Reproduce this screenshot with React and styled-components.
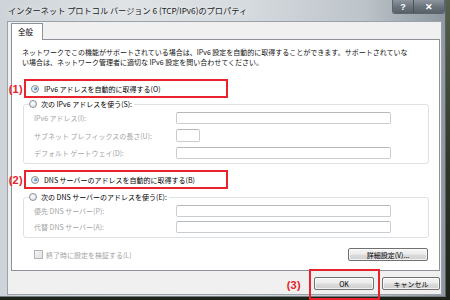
import React from 'react';
import styled, { createGlobalStyle, css } from 'styled-components';

const GlobalStyle = createGlobalStyle`
  html, body { margin: 0; padding: 0; }
  body {
    width: 450px;
    height: 300px;
    overflow: hidden;
    background: #2e3427;
    font-family: "Noto Sans CJK JP", "Noto Sans", sans-serif;
  }
  * { box-sizing: border-box; }
`;

const RED = '#e8232b';

const Page = styled.div`
  width: 450px;
  height: 300px;
  overflow: hidden;
  background: linear-gradient(180deg, #56604a 0%, #2f3527 55%, #1e2219 100%);
`;

const Window = styled.div`
  width: 446px;
  height: 297px;
  display: flex;
  flex-direction: column;
  background: linear-gradient(90deg, #cdd3d8 0%, #dfe3e6 28%, #d6dbdf 55%, #bcc3c9 82%, #8e979f 100%);
  border-right: 1px solid #59616a;
  border-bottom: 1px solid #737b83;
`;

const TitleBar = styled.div`
  height: 21px;
  display: flex;
  align-items: flex-start;
`;

const Title = styled.div`
  padding: 4px 0 0 8px;
  font-size: 8.2px;
  line-height: 12px;
  color: #1c1c1c;
  white-space: nowrap;
  text-shadow: 0 0 5px rgba(255, 255, 255, 0.95);
`;

const Caption = styled.div`
  margin-left: auto;
  display: flex;
  border: 1px solid #5b636b;
  border-top: none;
  border-radius: 0 0 3px 3px;
  overflow: hidden;
`;

const CapBtn = styled.div`
  width: ${p => p.$w}px;
  height: 13px;
  display: flex;
  align-items: center;
  justify-content: center;
  background: linear-gradient(180deg, #8d969e 0%, #6c757d 50%, #575f67 100%);
  color: #fff;
  font-family: "Liberation Sans", sans-serif;
  font-weight: bold;
  font-size: 9px;
  & + & { border-left: 1px solid #4a5159; }
`;

const Body = styled.div`
  margin: 0 3px 0 7px;
  height: 274px;
  background: #f0f0f0;
  border: 1px solid #9aa1a8;
  padding: 0 1px 0 3px;
  display: flex;
  flex-direction: column;
`;

const Tabs = styled.div`
  display: flex;
  padding-top: 1px;
  position: relative;
  z-index: 1;
`;

const Tab = styled.div`
  width: 32px;
  height: 17px;
  margin-bottom: -1px;
  background: #fff;
  border: 1px solid #8e9299;
  border-bottom: none;
  font-size: 7.5px;
  line-height: 15px;
  padding-left: 6px;
  color: #000;
`;

const Panel = styled.div`
  height: 232px;
  background: #fff;
  border: 1px solid #8e9299;
  padding-top: 7px;
  display: flex;
  flex-direction: column;
`;

const Desc = styled.div`
  padding-left: 10px;
  font-size: 7px;
  line-height: 10px;
  color: #111;
  white-space: nowrap;
`;

const Option = styled.div`
  position: relative;
  margin: ${p => p.$top}px 0 0 12px;
  width: 204px;
  height: 19px;
  border: 2px solid ${RED};
  display: flex;
  align-items: center;
  gap: 5px;
  padding-left: 5px;
  font-size: 7px;
  color: #000;
  white-space: nowrap;
`;

const Tag = styled.span`
  position: absolute;
  right: calc(100% + 3px);
  top: 50%;
  transform: translateY(-52%);
  color: ${RED};
  font-family: "Liberation Sans", sans-serif;
  font-weight: bold;
  font-size: 11px;
  letter-spacing: 0.3px;
`;

const Radio = styled.span`
  flex: none;
  position: relative;
  width: 8px;
  height: 8px;
  border-radius: 50%;
  border: 1px solid #8a9097;
  background: radial-gradient(circle at 40% 35%, #ffffff 0%, #e6e8ea 60%, #cfd3d6 100%);
  ${p => p.$on && css`
    &::after {
      content: '';
      position: absolute;
      left: 1.5px;
      top: 1.5px;
      width: 3px;
      height: 3px;
      border-radius: 50%;
      background: radial-gradient(circle at 35% 35%, #9fd2ff 0%, #2b6cc4 70%, #1d4f99 100%);
    }
  `}
`;

const Group = styled.fieldset`
  margin: ${p => p.$top}px 0 0 11px;
  width: 406px;
  padding: 2px 0 4px 10px;
  border: 1px solid #dde1e5;
  border-radius: 3px;
  min-inline-size: 0;
`;

const Legend = styled.legend`
  margin-left: -5px;
  padding: 0 2px 0 0;
  display: flex;
  align-items: center;
  gap: 4px;
  font-size: 7px;
  line-height: 12px;
  height: 12px;
  color: #000;
  white-space: nowrap;
`;

const Rows = styled.div`
  display: grid;
  grid-template-columns: 142px 1fr;
  row-gap: ${p => p.$gap}px;
  align-items: center;
`;

const Label = styled.span`
  font-size: 7px;
  color: #a3a3a3;
  white-space: nowrap;
`;

const Input = styled.div`
  width: ${p => p.$w}px;
  height: ${p => p.$h || 12}px;
  background: #fff;
  border: 1px solid #c9cdd1;
  border-top-color: #b5b9bd;
  border-radius: 2px;
`;

const BottomRow = styled.div`
  margin-top: auto;
  padding: 0 11px 9px 22px;
  display: flex;
  align-items: center;
`;

const Check = styled.span`
  width: 9px;
  height: 9px;
  border: 1px solid #b1b5b9;
  background: linear-gradient(135deg, #f4f4f4 0%, #e2e2e2 100%);
  margin-right: 3px;
`;

const CheckText = styled.span`
  font-size: 7px;
  color: #a3a3a3;
  white-space: nowrap;
`;

const Button = styled.div`
  width: ${p => p.$w}px;
  height: 13px;
  margin-left: ${p => (p.$push ? 'auto' : '0')};
  border: 1px solid #707070;
  border-radius: 2px;
  background: linear-gradient(180deg, #f4f4f4 0%, #ececec 48%, #dcdcdc 52%, #cfcfcf 100%);
  box-shadow: inset 0 0 0 1px rgba(255, 255, 255, 0.7);
  display: flex;
  align-items: center;
  justify-content: center;
  font-size: 7px;
  color: #000;
  white-space: nowrap;
`;

const Footer = styled.div`
  display: flex;
  justify-content: flex-end;
  gap: 8px;
  padding-top: 6px;
`;

const Marked = styled.div`
  position: relative;
`;

const RedBox = styled.div`
  position: absolute;
  left: -5px;
  right: -6px;
  top: -8px;
  bottom: -10px;
  border: 2px solid ${RED};
`;

const FooterTag = styled(Tag)`
  right: calc(100% + 13px);
  transform: translateY(-45%);
`;

const Field = ({ label, w, h }) => (
  <>
    <Label>{label}</Label>
    <Input $w={w} $h={h} />
  </>
);

export default function App() {
  return (
    <Page>
      <GlobalStyle />
      <Window>
        <TitleBar>
          <Title>インターネット プロトコル バージョン 6 (TCP/IPv6)のプロパティ</Title>
          <Caption>
            <CapBtn $w={20}>?</CapBtn>
            <CapBtn $w={31}>✕</CapBtn>
          </Caption>
        </TitleBar>
        <Body>
          <Tabs>
            <Tab>全般</Tab>
          </Tabs>
          <Panel>
            <Desc>
              ネットワークでこの機能がサポートされている場合は、IPv6 設定を自動的に取得することができます。サポートされていな
              <br />
              い場合は、ネットワーク管理者に適切な IPv6 設定を問い合わせてください。
            </Desc>

            <Option $top={12}>
              <Tag>(1)</Tag>
              <Radio $on />
              IPv6 アドレスを自動的に取得する(O)
            </Option>

            <Group $top={0}>
              <Legend>
                <Radio />
                次の IPv6 アドレスを使う(S):
              </Legend>
              <Rows $gap={5}>
                <Field label="IPv6 アドレス(I):" w={215} />
                <Field label="サブネット プレフィックスの長さ(U):" w={24} h={13} />
                <Field label="デフォルト ゲートウェイ(D):" w={215} />
              </Rows>
            </Group>

            <Option $top={6}>
              <Tag>(2)</Tag>
              <Radio $on />
              DNS サーバーのアドレスを自動的に取得する(B)
            </Option>

            <Group $top={2}>
              <Legend>
                <Radio />
                次の DNS サーバーのアドレスを使う(E):
              </Legend>
              <Rows $gap={4}>
                <Field label="優先 DNS サーバー(P):" w={215} />
                <Field label="代替 DNS サーバー(A):" w={215} />
              </Rows>
            </Group>

            <BottomRow>
              <Check />
              <CheckText>終了時に設定を検証する(L)</CheckText>
              <Button $w={80} $push>詳細設定(V)...</Button>
            </BottomRow>
          </Panel>
          <Footer>
            <Marked>
              <FooterTag>(3)</FooterTag>
              <RedBox />
              <Button $w={60}>OK</Button>
            </Marked>
            <Button $w={58}>キャンセル</Button>
          </Footer>
        </Body>
      </Window>
    </Page>
  );
}
